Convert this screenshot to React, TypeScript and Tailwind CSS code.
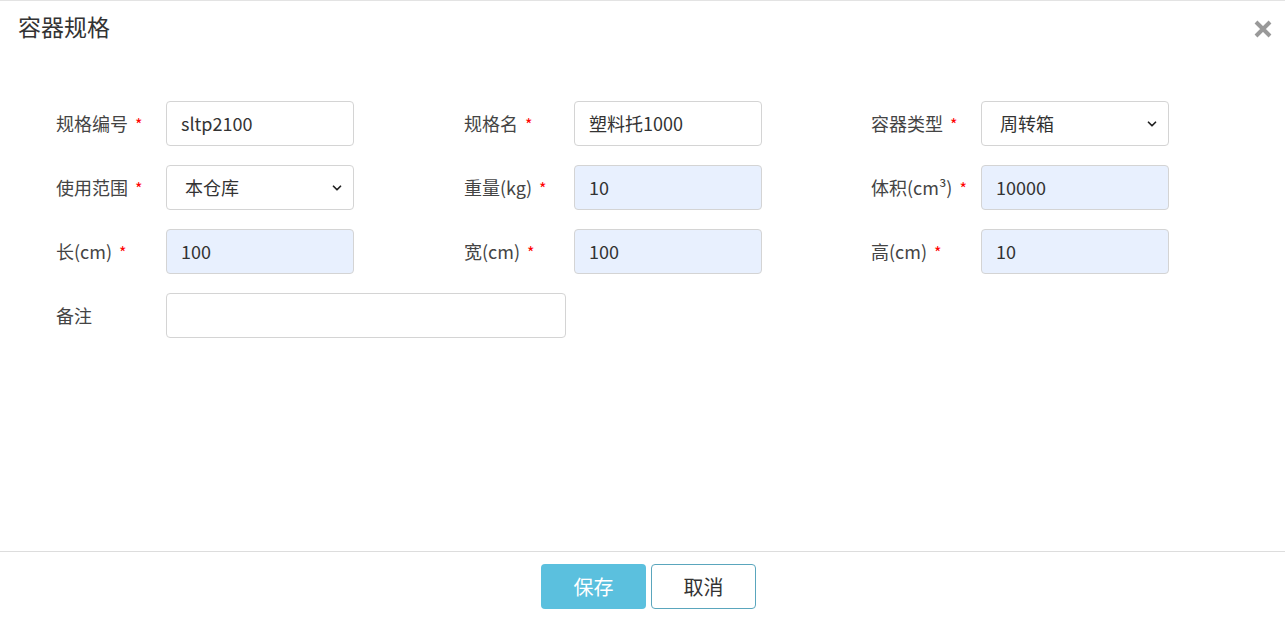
import { ChevronDown } from "lucide-react";

type Field = {
  label: string;
  required?: boolean;
  value?: string;
  kind?: "text" | "select" | "filled";
  wide?: boolean;
};

const ROWS: Field[][] = [
  [
    { label: "规格编号", required: true, value: "sltp2100" },
    { label: "规格名", required: true, value: "塑料托1000" },
    { label: "容器类型", required: true, value: "周转箱", kind: "select" },
  ],
  [
    { label: "使用范围", required: true, value: "本仓库", kind: "select" },
    { label: "重量(kg)", required: true, value: "10", kind: "filled" },
    { label: "体积(cm³)", required: true, value: "10000", kind: "filled" },
  ],
  [
    { label: "长(cm)", required: true, value: "100", kind: "filled" },
    { label: "宽(cm)", required: true, value: "100", kind: "filled" },
    { label: "高(cm)", required: true, value: "10", kind: "filled" },
  ],
  [{ label: "备注", value: "", wide: true }],
];

function FieldCell({ f, first }: { f: Field; first: boolean }) {
  const base =
    "h-[45px] rounded-[4px] border border-[#d4d4d4] flex items-center text-[18px] text-[#333] shrink-0";
  let box;
  if (f.kind === "select") {
    box = (
      <div className={`${base} w-[188px] bg-white pl-[18px] pr-[9px] justify-between`}>
        <span>{f.value}</span>
        <ChevronDown className="w-[14px] h-[14px] text-[#222]" strokeWidth={3} />
      </div>
    );
  } else if (f.kind === "filled") {
    box = <div className={`${base} w-[188px] bg-[#e8f0fe] px-[14px]`}>{f.value}</div>;
  } else {
    box = (
      <div className={`${base} ${f.wide ? "w-[400px]" : "w-[188px]"} bg-white px-[14px]`}>
        {f.value}
      </div>
    );
  }
  return (
    <div className={`flex items-center shrink-0 ${f.wide ? "" : first ? "w-[408px]" : "w-[407px]"}`}>
      <div className="w-[110px] shrink-0 text-[18px] text-[#444] flex items-center">
        {f.label}
        {f.required && <span className="text-[#ff0000] ml-[7px] text-[16px]">*</span>}
      </div>
      {box}
    </div>
  );
}

export default function App() {
  return (
    <div
      className="w-[1285px] h-[625px] bg-white border-t border-[#e3e3e3] flex flex-col"
      style={{ fontFamily: '"Noto Sans CJK SC", "Noto Sans", sans-serif' }}
    >
      <div className="h-[55px] flex items-center justify-between pl-[18px] pr-[12px] pb-[4px]">
        <h1 className="text-[23px] text-[#333]">容器规格</h1>
        <svg width="20" height="20" viewBox="0 0 20 20" className="mt-[5px]">
          <path d="M3 3 L17 17 M17 3 L3 17" stroke="#999" strokeWidth="4" strokeLinecap="butt" />
        </svg>
      </div>
      <div className="flex-1 pt-[45px] pl-[56px] flex flex-col gap-[19px]">
        {ROWS.map((row, i) => (
          <div key={i} className="flex">
            {row.map((f, j) => (
              <FieldCell key={f.label} f={f} first={j === 0} />
            ))}
          </div>
        ))}
      </div>
      <div className="h-[74px] border-t border-[#ddd] flex justify-center gap-[5px] pt-[12px] pl-[12px]">
        <button className="w-[105px] h-[45px] rounded-[4px] bg-[#5bc0de] text-white text-[20px]">
          保存
        </button>
        <button className="w-[105px] h-[45px] rounded-[4px] bg-white border border-[#5aa6bd] text-[#333] text-[20px]">
          取消
        </button>
      </div>
    </div>
  );
}
